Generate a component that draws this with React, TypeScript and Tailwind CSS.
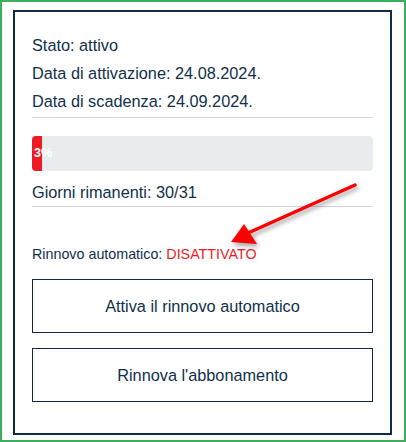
import React from 'react'

const daysLeft = 30
const daysTotal = 31
const percent = 3

const InfoRow = ({ children }: { children: React.ReactNode }) => (
  <div className="h-[28px] leading-[28px] text-[16.3px]">{children}</div>
)

const Arrow = () => (
  <svg
    className="absolute left-0 top-0 pointer-events-none"
    width="406"
    height="442"
    viewBox="0 0 406 442"
    style={{ filter: 'drop-shadow(2px 3px 2px rgba(0,0,0,0.35))' }}
  >
    <line x1="353" y1="183" x2="246" y2="231" stroke="#ff0000" strokeWidth="3.5" strokeLinecap="round" />
    <polygon points="229,240 242,222 255,242" fill="#ff0000" />
  </svg>
)

export default function App() {
  return (
    <div className="relative w-[406px] h-[442px] bg-white border-2 border-[#3dae5c] font-['Liberation_Sans',Arial,sans-serif] text-[#10304c]">
      <div className="absolute left-[11px] top-[8px] w-[379px] h-[425px] border-2 border-[#0f2b47] px-[17px] pt-[19px]">
        <InfoRow>Stato: attivo</InfoRow>
        <InfoRow>Data di attivazione: 24.08.2024.</InfoRow>
        <InfoRow>Data di scadenza: 24.09.2024.</InfoRow>
        <div className="mt-[2px] h-px bg-[#d4d4d4]" />

        <div className="mt-[18px] h-[35px] rounded-[4px] bg-[#e9ecef] flex overflow-visible">
          <div
            className="h-full bg-[#ed1c24] rounded-l-[4px] flex items-center pl-[2px] text-[12.5px] font-bold text-white whitespace-nowrap overflow-visible"
            style={{ width: `${Math.max(percent, 3)}%` }}
          >
            {percent}%
          </div>
        </div>

        <div className="mt-[7px] h-[28px] leading-[28px] text-[16.3px]">
          Giorni rimanenti: {daysLeft}/{daysTotal}
        </div>
        <div className="h-px bg-[#d4d4d4]" />

        <div className="mt-[37px] text-[14.3px] leading-[20px]">
          Rinnovo automatico: <span className="text-[#ed1c24]">DISATTIVATO</span>
        </div>

        <div className="mt-[15px] flex flex-col gap-[15px]">
          <button className="h-[54px] w-full border-[1.5px] border-[#0f2b47] text-[16.3px] bg-white text-[#10304c]">
            Attiva il rinnovo automatico
          </button>
          <button className="h-[54px] w-full border-[1.5px] border-[#0f2b47] text-[16.3px] bg-white text-[#10304c]">
            Rinnova l'abbonamento
          </button>
        </div>
      </div>
      <Arrow />
    </div>
  )
}
